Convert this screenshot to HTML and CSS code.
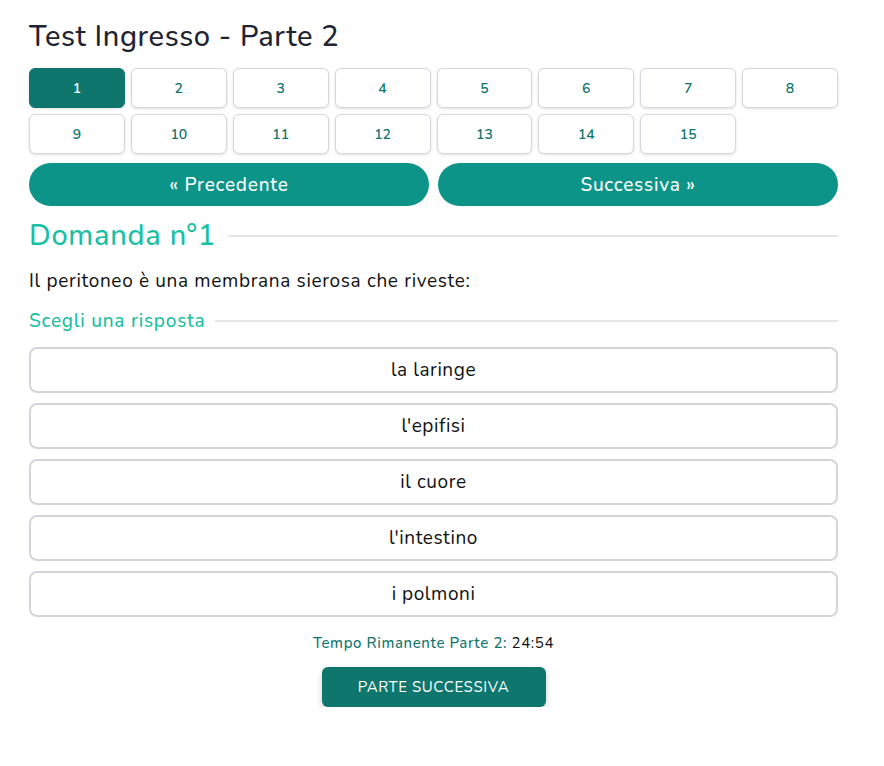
FILE: index.html
```html
<!DOCTYPE html>
<html lang="it">
<head>
    <meta charset="UTF-8">
    <meta name="viewport" content="width=device-width, initial-scale=1.0">
    <title>Test Ingresso - Parte 2</title>
    <link rel="stylesheet" href="styles.css">
</head>
<body>
    <div class="quiz-container">
        <h1>Test Ingresso - Parte 2</h1>

        <div class="question-grid">
            <button class="q-btn active">1</button>
            <button class="q-btn">2</button>
            <button class="q-btn">3</button>
            <button class="q-btn">4</button>
            <button class="q-btn">5</button>
            <button class="q-btn">6</button>
            <button class="q-btn">7</button>
            <button class="q-btn">8</button>
            <button class="q-btn">9</button>
            <button class="q-btn">10</button>
            <button class="q-btn">11</button>
            <button class="q-btn">12</button>
            <button class="q-btn">13</button>
            <button class="q-btn">14</button>
            <button class="q-btn">15</button>
        </div>

        <div class="nav-buttons">
            <button class="nav-btn">&laquo; Precedente</button>
            <button class="nav-btn">Successiva &raquo;</button>
        </div>

        <h2 class="divider-title">Domanda n°1</h2>
        <p class="question-text">Il peritoneo è una membrana sierosa che riveste:</p>

        <h3 class="divider-title small">Scegli una risposta</h3>
        <div class="answers">
            <button class="answer">la laringe</button>
            <button class="answer">l'epifisi</button>
            <button class="answer">il cuore</button>
            <button class="answer">l'intestino</button>
            <button class="answer">i polmoni</button>
        </div>

        <p class="timer">Tempo Rimanente Parte 2: <span class="timer-value">24:54</span></p>
        <div class="next-part">
            <button class="next-part-btn">Parte successiva</button>
        </div>
    </div>
</body>
</html>
```

FILE: styles.css
```css
body {
    font-family: "Nunito", "Noto Sans", sans-serif;
    background-color: #fff;
    color: #111;
    margin: 0;
}

.quiz-container {
    width: 809px;
    padding: 19px 0 0 29px;
}

h1 {
    font-size: 29px;
    font-weight: 500;
    color: #1f2433;
    margin: 0 0 13px;
    line-height: 36px;
    letter-spacing: 0.02em;
}

button {
    font-family: inherit;
    cursor: pointer;
}

.question-grid {
    display: grid;
    grid-template-columns: repeat(8, 1fr);
    gap: 6px;
}

.q-btn {
    height: 40px;
    background-color: #fff;
    border: 1px solid #d6d6dc;
    border-radius: 6px;
    color: #0f766e;
    font-size: 14px;
    font-weight: 600;
    box-shadow: 0 1px 3px rgba(0, 0, 0, 0.12);
}

.q-btn.active {
    background-color: #0f766e;
    border-color: #0f766e;
    color: #fff;
}

.nav-buttons {
    display: flex;
    gap: 9px;
    margin-top: 9px;
}

.nav-btn {
    flex: 1;
    height: 43px;
    border: none;
    border-radius: 22px;
    background-color: #0d9488;
    color: #fff;
    font-size: 19px;
    font-weight: 500;
    letter-spacing: 0.04em;
}

.divider-title {
    display: flex;
    align-items: center;
    gap: 12px;
    color: #1abfa4;
    font-size: 29px;
    font-weight: 500;
    margin: 12px 0 0;
    line-height: 36px;
    letter-spacing: 0.025em;
}

.divider-title::after {
    content: "";
    flex: 1;
    height: 2px;
    background-color: #e5e5ea;
}

.divider-title.small {
    font-size: 19px;
    line-height: 24px;
    margin-top: 16px;
    letter-spacing: 0.04em;
    gap: 10px;
}

.question-text {
    font-size: 19px;
    margin: 15px 0 0;
    line-height: 24px;
    letter-spacing: 0.035em;
}

.answers {
    display: flex;
    flex-direction: column;
    gap: 10px;
    margin-top: 14px;
}

.answer {
    height: 46px;
    background-color: #fff;
    border: 2px solid #d4d5da;
    border-radius: 8px;
    font-size: 19px;
    color: #111;
    letter-spacing: 0.03em;
}

.timer {
    text-align: center;
    font-size: 15px;
    font-weight: 500;
    color: #0f766e;
    margin: 16px 0 0;
    line-height: 20px;
    letter-spacing: 0.04em;
}

.timer-value {
    color: #111;
    font-weight: 400;
}

.next-part {
    display: flex;
    justify-content: center;
    margin-top: 14px;
}

.next-part-btn {
    width: 224px;
    height: 40px;
    border: none;
    border-radius: 6px;
    background-color: #0f766e;
    color: #fff;
    font-size: 15px;
    text-transform: uppercase;
    letter-spacing: 0.04em;
    box-shadow: 0 3px 6px rgba(0, 0, 0, 0.2);
}
```
